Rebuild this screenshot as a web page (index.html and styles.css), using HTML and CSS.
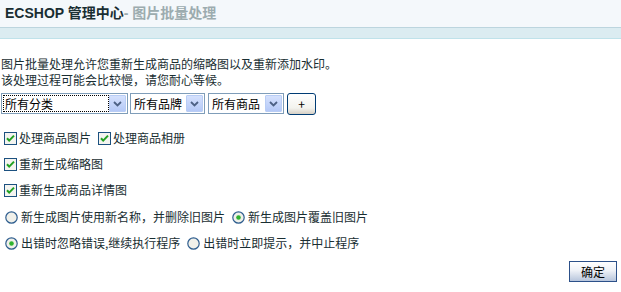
FILE: index.html
```html
<!DOCTYPE html>
<html>
<head>
<meta charset="utf-8">
<link rel="stylesheet" href="styles.css">
</head>
<body>
<h1 class="title"><span class="brand">ECSHOP 管理中心</span><span class="sub">- 图片批量处理</span></h1>
<div class="strip"></div>
<div class="main">
  <p class="intro">图片批量处理允许您重新生成商品的缩略图以及重新添加水印。<br>该处理过程可能会比较慢，请您耐心等候。</p>
  <div class="filters">
    <div class="select s1"><span class="val focus">所有分类</span><span class="arrow"><svg width="9" height="6" viewBox="0 0 9 6"><path d="M1 1 L4.5 4.5 L8 1" fill="none" stroke="#4d6185" stroke-width="1.8"/></svg></span></div>
    <div class="select s2"><span class="val">所有品牌</span><span class="arrow"><svg width="9" height="6" viewBox="0 0 9 6"><path d="M1 1 L4.5 4.5 L8 1" fill="none" stroke="#4d6185" stroke-width="1.8"/></svg></span></div>
    <div class="select s3"><span class="val">所有商品</span><span class="arrow"><svg width="9" height="6" viewBox="0 0 9 6"><path d="M1 1 L4.5 4.5 L8 1" fill="none" stroke="#4d6185" stroke-width="1.8"/></svg></span></div>
    <button class="btn plus">+</button>
  </div>
  <div class="opts">
    <div class="row">
      <span class="cb"><svg width="13" height="13" viewBox="0 0 13 13"><rect x="0.5" y="0.5" width="12" height="12" fill="#f4f4f0" stroke="#1c5180"/><path d="M3 6.2 L5.2 8.6 L10 3.6" fill="none" stroke="#21a121" stroke-width="2"/></svg></span><span class="lbl">处理商品图片</span>
      <span class="cb gap"><svg width="13" height="13" viewBox="0 0 13 13"><rect x="0.5" y="0.5" width="12" height="12" fill="#f4f4f0" stroke="#1c5180"/><path d="M3 6.2 L5.2 8.6 L10 3.6" fill="none" stroke="#21a121" stroke-width="2"/></svg></span><span class="lbl">处理商品相册</span>
    </div>
    <div class="row">
      <span class="cb"><svg width="13" height="13" viewBox="0 0 13 13"><rect x="0.5" y="0.5" width="12" height="12" fill="#f4f4f0" stroke="#1c5180"/><path d="M3 6.2 L5.2 8.6 L10 3.6" fill="none" stroke="#21a121" stroke-width="2"/></svg></span><span class="lbl">重新生成缩略图</span>
    </div>
    <div class="row">
      <span class="cb"><svg width="13" height="13" viewBox="0 0 13 13"><rect x="0.5" y="0.5" width="12" height="12" fill="#f4f4f0" stroke="#1c5180"/><path d="M3 6.2 L5.2 8.6 L10 3.6" fill="none" stroke="#21a121" stroke-width="2"/></svg></span><span class="lbl">重新生成商品详情图</span>
    </div>
    <div class="row radios first">
      <span class="rd"><svg width="13" height="13" viewBox="0 0 13 13"><circle cx="6.5" cy="6.5" r="5.7" fill="#f0f0ea" stroke="#2f5e8f" stroke-width="1.2"/></svg></span><span class="lbl">新生成图片使用新名称，并删除旧图片</span>
      <span class="rd gap2"><svg width="13" height="13" viewBox="0 0 13 13"><circle cx="6.5" cy="6.5" r="5.7" fill="#f0f0ea" stroke="#2f5e8f" stroke-width="1.2"/><circle cx="6.5" cy="6.5" r="2.3" fill="#2fb32f"/></svg></span><span class="lbl">新生成图片覆盖旧图片</span>
    </div>
    <div class="row radios">
      <span class="rd"><svg width="13" height="13" viewBox="0 0 13 13"><circle cx="6.5" cy="6.5" r="5.7" fill="#f0f0ea" stroke="#2f5e8f" stroke-width="1.2"/><circle cx="6.5" cy="6.5" r="2.3" fill="#2fb32f"/></svg></span><span class="lbl">出错时忽略错误,继续执行程序</span>
      <span class="rd gap3"><svg width="13" height="13" viewBox="0 0 13 13"><circle cx="6.5" cy="6.5" r="5.7" fill="#f0f0ea" stroke="#2f5e8f" stroke-width="1.2"/></svg></span><span class="lbl">出错时立即提示，并中止程序</span>
    </div>
  </div>
  <div class="actions"><button class="btn ok">确定</button></div>
</div>
</body>
</html>
```

FILE: styles.css
```css
html, body {
  margin: 0;
  padding: 0;
  background: #fff;
}
body {
  font-family: "Noto Sans CJK SC", "Liberation Sans", sans-serif;
  font-size: 12px;
  color: #192e32;
}
.title {
  margin: 0;
  height: 28px;
  box-sizing: border-box;
  background: #f4f8fb;
  border-bottom: 1px solid #bcd5de;
  font-family: "Liberation Sans", "Noto Sans CJK SC", sans-serif;
  font-size: 14px;
  font-weight: bold;
  line-height: 27px;
  padding-left: 5px;
}
.brand { color: #192e32; }
.sub { color: #9cacaf; }
.strip {
  height: 10px;
  background: #dbecf1;
  border-bottom: 1px solid #bfe2ea;
}
.main {
  padding-left: 1px;
}
.intro {
  margin: 17px 0 0;
  line-height: 16px;
}
.filters {
  display: flex;
  align-items: flex-start;
  margin-top: 5px;
  height: 22px;
}
.select {
  display: flex;
  align-items: center;
  height: 21px;
  box-sizing: border-box;
  border: 1px solid #7f9db9;
  background: #fff;
  padding: 1px;
}
.s1 { width: 127px; margin-right: 2px; }
.s2 { width: 75px; margin-right: 3px; }
.s3 { width: 76px; margin-right: 3px; }
.val {
  flex: 1;
  height: 17px;
  line-height: 17px;
  padding-left: 2px;
  box-sizing: border-box;
  font-size: 12px;
  color: #000;
  overflow: hidden;
  white-space: nowrap;
}
.val.focus {
  outline: 1px dotted #000;
  outline-offset: -1px;
}
.arrow {
  width: 17px;
  height: 17px;
  box-sizing: border-box;
  border: 1px solid #b9cdf5;
  background: linear-gradient(#d5e1fd, #b5c9f7);
  display: flex;
  align-items: center;
  justify-content: center;
  border-radius: 1px;
}
.btn {
  font-family: "Noto Sans CJK SC", "Liberation Sans", sans-serif;
  font-size: 12px;
  color: #000;
  padding: 0;
  cursor: default;
}
.plus {
  width: 29px;
  height: 22px;
  border: 1px solid #003c74;
  border-radius: 3px;
  background: linear-gradient(#ffffff, #f3f3ee 70%, #d6d0c5);
  line-height: 18px;
}
.opts {
  margin-top: 10px;
}
.row {
  display: flex;
  align-items: center;
  height: 26px;
  white-space: nowrap;
}
.row.first { margin-top: 1px; }
.cb, .rd {
  display: inline-flex;
  width: 13px;
  height: 13px;
  margin-left: 3px;
  margin-right: 2px;
}
.rd {
  margin-left: 4px;
  margin-right: 3px;
}
.cb.gap { margin-left: 7px; }
.rd.gap2 { margin-left: 7px; }
.rd.gap3 { margin-left: 7px; }
.lbl {
  line-height: 16px;
}
.actions {
  display: flex;
  justify-content: flex-end;
  margin-top: 5px;
  padding-right: 4px;
}
.ok {
  width: 48px;
  height: 21px;
  border: 1px solid #2c5089;
  background: linear-gradient(#ffffff, #eef1f7 45%, #b7c5dc);
  line-height: 17px;
}
```
